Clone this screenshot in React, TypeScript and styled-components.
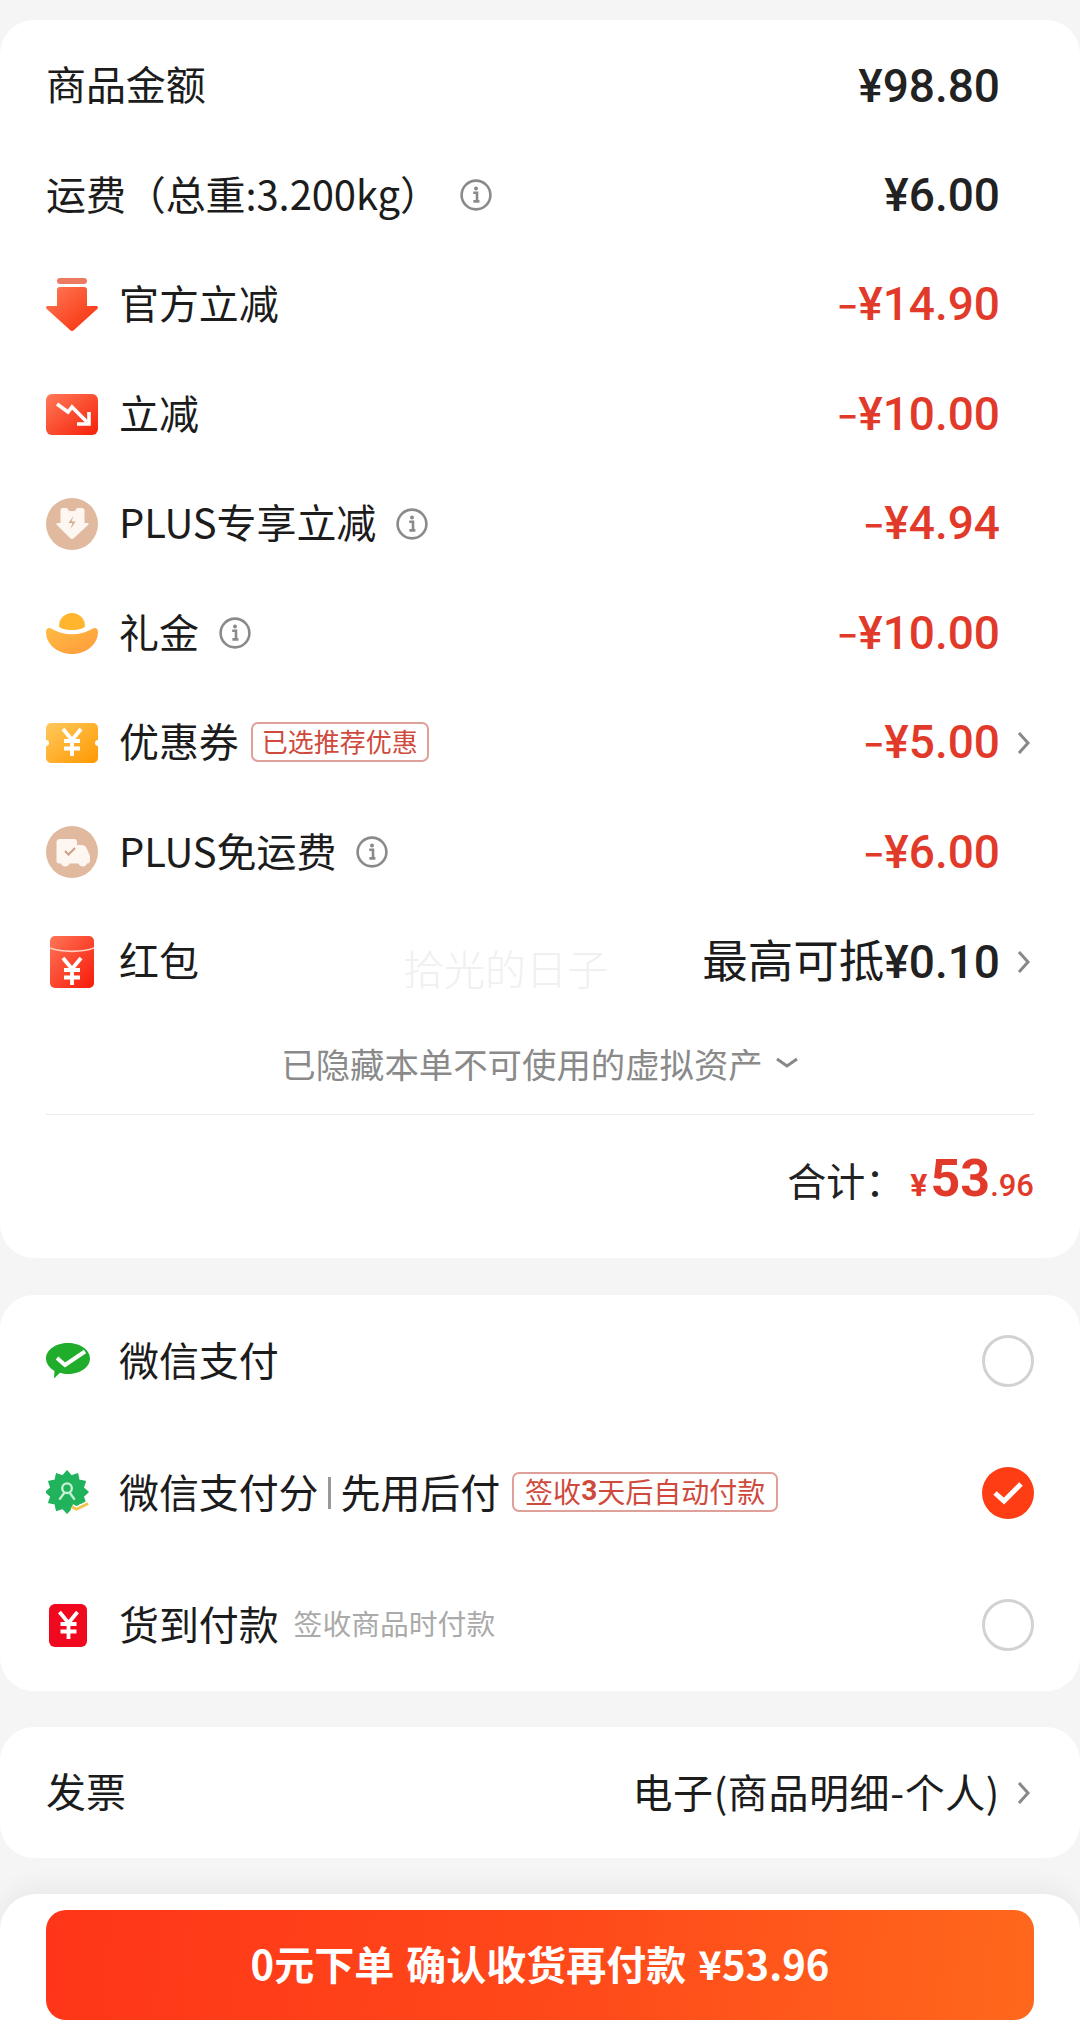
import { FC, ReactNode } from 'react'
import styled, { createGlobalStyle } from 'styled-components'

const GlobalStyle = createGlobalStyle`
  html, body {
    margin: 0;
    padding: 0;
    background: #f5f5f5;
  }
  * {
    box-sizing: border-box;
  }
`

const CJK = `"Noto Sans CJK SC", "Noto Sans", sans-serif`

const Page = styled.div`
  position: relative;
  width: 1080px;
  height: 2037px;
  overflow: hidden;
  padding-top: 20px;
  background: #f5f5f5;
  color: #1c1c1c;
  font-family: ${CJK};
  font-size: 40px;
`

const Card = styled.section`
  background: #fff;
  border-radius: 34px;
  margin-bottom: 36px;
`

const PriceCard = styled(Card)`
  height: 1238px;
  padding-top: 11px;
  margin-bottom: 37px;
`

const Row = styled.div<{ $height?: number }>`
  display: flex;
  align-items: center;
  height: ${p => p.$height ?? 109.5}px;
  padding: 0 46px;
`

const IconSlot = styled.span`
  display: flex;
  justify-content: center;
  align-items: center;
  flex: none;
  width: 52px;
  margin-right: 21px;
`

const PayIconSlot = styled(IconSlot)`
  width: 44px;
  margin-right: 29px;
`

const Label = styled.span`
  padding-bottom: 5px;
  line-height: 48px;
  letter-spacing: -0.1px;
  white-space: nowrap;
`

const Spacer = styled.span`
  flex: 1;
`

const Amount = styled.span<{ $red?: boolean }>`
  padding-top: ${p => (p.$red ? 2 : 0)}px;
  font-family: Roboto, sans-serif;
  font-weight: 500;
  font-size: 46px;
  line-height: 52px;
  white-space: nowrap;
  color: ${p => (p.$red ? '#e23a2a' : '#222')};
`

const Minus = styled.span`
  font-size: 38px;
`

const PlainValue = styled.span<{ $size?: number }>`
  padding-bottom: 3px;
  font-size: ${p => p.$size ?? 40}px;
  letter-spacing: ${p => (p.$size ? 0 : 0.6)}px;
  line-height: 48px;
  white-space: nowrap;
`

const ValueNumber = styled.span`
  font-family: Roboto, sans-serif;
  font-weight: 500;
  font-size: 46px;
  color: #222;
`

const ChevronSlot = styled.span`
  display: flex;
  justify-content: flex-end;
  align-items: center;
  flex: none;
  width: 34px;
  padding-right: 4px;
`

const InfoWrap = styled.span`
  display: flex;
  margin-left: 20px;
`

const Tag = styled.span<{ $size?: number }>`
  display: inline-flex;
  align-items: center;
  height: 40px;
  padding: 0 ${p => (p.$size ? 11 : 9)}px 2px;
  margin-left: 12px;
  margin-bottom: 2px;
  border: 2px solid #e0a09a;
  border-radius: 7px;
  color: #cf4a3c;
  font-size: ${p => p.$size ?? 26}px;
  line-height: 1;
  white-space: nowrap;
`

const TagBold = styled.b`
  font-family: Roboto, sans-serif;
  font-weight: 700;
  font-size: 28px;
`

const Hint = styled.span`
  margin-left: 15px;
  padding-bottom: 6px;
  color: #aaa;
  font-size: 28.8px;
  white-space: nowrap;
`

const Divider = styled.span`
  display: inline-block;
  width: 3px;
  height: 32px;
  margin: 0 10px 0 9px;
  background: #999;
`

const CollapseRow = styled.div`
  display: flex;
  justify-content: center;
  align-items: center;
  gap: 12px;
  height: 62px;
  margin: 15px 46px 0;
  color: #8a8a8a;
  font-size: 34.4px;
`

const Rule = styled.div`
  height: 1px;
  margin: 20px 46px 0;
  background: #ececec;
`

const TotalRow = styled.div`
  display: flex;
  justify-content: flex-end;
  align-items: baseline;
  height: 104px;
  padding: 33px 46px 0 0;
  font-size: 39px;
  color: #222;
`

const TotalLabel = styled.span`
  margin-right: 6px;
`

const TotalPrice = styled.span`
  font-family: Roboto, sans-serif;
  font-weight: 500;
  color: #e23a2a;
  font-size: 31px;
`

const TotalYen = styled.span`
  font-weight: 700;
  font-size: 32px;
  margin-right: 3px;
`

const TotalMain = styled.span`
  font-weight: 700;
  font-size: 52px;
`

const Watermark = styled.span`
  position: absolute;
  left: 403px;
  top: 942px;
  font-size: 41px;
  line-height: 50px;
  font-weight: 300;
  color: #f0f0f0;
  white-space: nowrap;
`

const Radio = styled.span<{ $checked?: boolean }>`
  display: flex;
  justify-content: center;
  align-items: center;
  flex: none;
  width: 52px;
  height: 52px;
  border-radius: 50%;
  border: ${p => (p.$checked ? '0' : '3px solid #d2d2d2')};
  background: ${p => (p.$checked ? '#ff3d14' : '#fff')};
`

const BottomBar = styled.div`
  height: 160px;
  padding: 16px 46px 0;
  background: #fff;
  border-radius: 36px 36px 0 0;
  box-shadow: 0 -8px 24px rgba(0, 0, 0, 0.05);
`

const SubmitButton = styled.button`
  display: flex;
  justify-content: center;
  align-items: center;
  width: 100%;
  height: 110px;
  padding: 0 0 4px;
  border: 0;
  border-radius: 20px;
  background: linear-gradient(95deg, #ff3518 0%, #ff4a1a 55%, #ff681c 100%);
  color: #fff;
  font-family: ${CJK};
  font-size: 40px;
  font-weight: 700;
  word-spacing: 3px;
  white-space: pre;
`

const Info: FC = () => (
  <InfoWrap>
    <svg width="32" height="32" viewBox="0 0 32 32" fill="none">
      <circle cx="16" cy="16" r="14.4" stroke="#8a8a8a" strokeWidth="2.6" />
      <circle cx="16" cy="9.6" r="2" fill="#8a8a8a" />
      <path d="M13.2 13.8h3.8v8M13.4 22.4h6" stroke="#8a8a8a" strokeWidth="2.6" />
    </svg>
  </InfoWrap>
)

const Chevron: FC = () => (
  <svg width="13" height="26" viewBox="0 0 13 26" fill="none">
    <path d="M2 3l9 10-9 10" stroke="#888" strokeWidth="3" />
  </svg>
)

const Yen: FC<{ x: number; y: number; s: number }> = ({ x, y, s }) => (
  <g transform={`translate(${x} ${y}) scale(${s})`} stroke="#fff" strokeWidth="3.8" fill="none">
    <path d="M1 0l9 11 9-11M10 11v16M2 12h16M2 19.500h16" />
  </g>
)

const ArrowIcon: FC = () => (
  <svg width="52" height="53" viewBox="0 0 52 53">
    <defs>
      <linearGradient id="arrow" x1="0" y1="0" x2="1" y2="1">
        <stop offset="0" stopColor="#ff7a58" />
        <stop offset="1" stopColor="#f72c08" />
      </linearGradient>
    </defs>
    <rect x="11" y="0" width="30" height="6" rx="3" fill="#ec7a60" />
    <path d="M11 12a3 3 0 013-3h24a3 3 0 013 3v16h9c2 0 2.600 1.500 1.200 3L28 52c-1.200 1.200-2.800 1.200-4 0L.8 31C-.6 29.500 0 28 2 28h9z" fill="url(#arrow)" />
  </svg>
)

const DropIcon: FC = () => (
  <svg width="52" height="41" viewBox="0 0 52 41" fill="none">
    <defs>
      <linearGradient id="drop" x1="0" y1="0" x2="1" y2="1">
        <stop offset="0" stopColor="#ff7a58" />
        <stop offset="1" stopColor="#f5200a" />
      </linearGradient>
    </defs>
    <rect width="52" height="41" rx="6" fill="url(#drop)" />
    <path d="M11 10l11 8 4-5 15 15" stroke="#fff" strokeWidth="3.6" />
    <path d="M43 18v12H31" stroke="#fff" strokeWidth="3.6" />
  </svg>
)

const PlusBadgeIcon: FC = () => (
  <svg width="52" height="52" viewBox="0 0 52 52">
    <circle cx="26" cy="26" r="26" fill="#e1b99e" />
    <path d="M16 10h5l2 3h6l2-3h5c1.500 0 2.500 1 2.500 2.500V25h3c1 0 1.500 1 .8 1.800L28 40c-1.200 1.200-2.800 1.200-4 0L10.700 26.800C10 26 10.500 25 11.500 25h3V12.500c0-1.500 1-2.500 1.500-2.500z" fill="#fdf6f1" />
    <path d="M27.500 18l-5 7h4l-2 6 5-7.500h-4z" fill="#d8a98c" />
  </svg>
)

const IngotIcon: FC = () => (
  <svg width="52" height="41" viewBox="0 0 52 41">
    <defs>
      <linearGradient id="ingot" x1="0" y1="0" x2="1" y2="1">
        <stop offset="0" stopColor="#ffbb42" />
        <stop offset="1" stopColor="#ff9a3c" />
      </linearGradient>
    </defs>
    <path d="M13 13a13 13 0 0126 0c0 2-6 4-13 4s-13-2-13-4z" fill="#ffb52e" />
    <path d="M0 19c0-3.500 3-5 6-3 12 7 28 7 40 0 3-2 6-.5 6 3 0 12-11.500 22-26 22S0 31 0 19z" fill="url(#ingot)" />
  </svg>
)

const CouponIcon: FC = () => (
  <svg width="52" height="40" viewBox="0 0 52 40">
    <defs>
      <linearGradient id="coupon" x1="0" y1="0" x2="1" y2="1">
        <stop offset="0" stopColor="#ffc95c" />
        <stop offset="1" stopColor="#ff9800" />
      </linearGradient>
    </defs>
    <path d="M5 0h42a5 5 0 015 5v12a3 3 0 000 6v12a5 5 0 01-5 5H5a5 5 0 01-5-5V23a3 3 0 000-6V5a5 5 0 015-5z" fill="url(#coupon)" />
    <Yen x={16} y={6} s={1} />
  </svg>
)

const TruckBadgeIcon: FC = () => (
  <svg width="52" height="52" viewBox="0 0 52 52" fill="none">
    <circle cx="26" cy="26" r="26" fill="#e1b99e" />
    <path d="M14 13h14c2 0 3 1 3 3v3h4c3 0 5 1.500 6 4l3 7v5c0 1.500-1 2.500-2.500 2.500H41a4.500 4.500 0 01-8.500 0h-9a4.500 4.500 0 01-8.500 0h-2c-1.500 0-2.500-1-2.500-2.500V16c0-2 1.500-3 3.500-3z" fill="#fdf6f1" />
    <path d="M19 25l3.500 3.500L29 22" stroke="#c9a48c" strokeWidth="2.200" />
  </svg>
)

const PacketIcon: FC = () => (
  <svg width="44" height="52" viewBox="0 0 44 52" fill="none">
    <defs>
      <linearGradient id="packet" x1="0" y1="0" x2="1" y2="1">
        <stop offset="0" stopColor="#ff7558" />
        <stop offset="1" stopColor="#f71a08" />
      </linearGradient>
    </defs>
    <rect width="44" height="52" rx="5" fill="url(#packet)" />
    <path d="M0 12c12 4.500 32 4.500 44 0" stroke="#ffd0c4" strokeWidth="1.600" />
    <Yen x={12} y={22} s={1} />
  </svg>
)

const WechatIcon: FC = () => (
  <svg width="44" height="36" viewBox="0 0 44 36" fill="none">
    <path d="M22 0c12 0 22 6.800 22 15.500S34 31 22 31c-3 0-5.500-.4-8-1.200L8 35.500l.5-7.500C3.500 25 0 20.500 0 15.500 0 6.800 10 0 22 0z" fill="#20ad2b" />
    <path d="M11 15l8 7L39 8.500" stroke="#fff" strokeWidth="4" />
  </svg>
)

const starPoints = Array.from({ length: 24 }, (_, i) => {
  const r = i % 2 === 0 ? 22 : 17.5
  const a = (i * Math.PI) / 12 - Math.PI / 2
  return `${22 + r * Math.cos(a)},${22 + r * Math.sin(a)}`
}).join(' ')

const ScoreIcon: FC = () => (
  <svg width="46" height="46" viewBox="0 0 46 46" fill="none">
    <polygon points={starPoints} fill="#21b35c" stroke="#21b35c" strokeWidth="1.500" strokeLinejoin="round" />
    <circle cx="22" cy="18" r="5" stroke="#c9f2d6" strokeWidth="2.400" />
    <path d="M19 23l-5 7M25 23l5 7" stroke="#c9f2d6" strokeWidth="2.400" />
    <path d="M27 37.500l5 2.500 12-6" stroke="#fff" strokeWidth="6" />
    <path d="M27 37.500l5 2.500 12-6" stroke="#f3c44a" strokeWidth="3" />
  </svg>
)

const CodIcon: FC = () => (
  <svg width="38" height="43" viewBox="0 0 38 43">
    <rect width="38" height="43" rx="6" fill="#f0081e" />
    <Yen x={9.500} y={8} s={1} />
  </svg>
)

const CheckMark: FC = () => (
  <svg width="32" height="24" viewBox="0 0 32 24" fill="none">
    <path d="M3 12l9 8L29 3" stroke="#fff" strokeWidth="5" />
  </svg>
)

interface DiscountRow {
  icon: ReactNode
  label: string
  value: string
  info?: boolean
  tag?: string
  chevron?: boolean
}

const discounts: DiscountRow[] = [
  { icon: <ArrowIcon />, label: '官方立减', value: '¥14.90' },
  { icon: <DropIcon />, label: '立减', value: '¥10.00' },
  { icon: <PlusBadgeIcon />, label: 'PLUS专享立减', value: '¥4.94', info: true },
  { icon: <IngotIcon />, label: '礼金', value: '¥10.00', info: true },
  { icon: <CouponIcon />, label: '优惠券', value: '¥5.00', tag: '已选推荐优惠', chevron: true },
  { icon: <TruckBadgeIcon />, label: 'PLUS免运费', value: '¥6.00', info: true }
]

const App: FC = () => (
  <Page>
    <GlobalStyle />
    <PriceCard>
      <Row>
        <Label>商品金额</Label>
        <Spacer />
        <Amount>¥98.80</Amount>
        <ChevronSlot />
      </Row>
      <Row>
        <Label>运费（总重:3.200kg）</Label>
        <Info />
        <Spacer />
        <Amount>¥6.00</Amount>
        <ChevronSlot />
      </Row>
      {discounts.map(d => (
        <Row key={d.label}>
          <IconSlot>{d.icon}</IconSlot>
          <Label>{d.label}</Label>
          {d.info && <Info />}
          {d.tag && <Tag>{d.tag}</Tag>}
          <Spacer />
          <Amount $red>
            <Minus>−</Minus>
            {d.value}
          </Amount>
          <ChevronSlot>{d.chevron && <Chevron />}</ChevronSlot>
        </Row>
      ))}
      <Row>
        <IconSlot>
          <PacketIcon />
        </IconSlot>
        <Label>红包</Label>
        <Spacer />
        <PlainValue $size={45.5}>
          最高可抵<ValueNumber>¥0.10</ValueNumber>
        </PlainValue>
        <ChevronSlot>
          <Chevron />
        </ChevronSlot>
      </Row>
      <CollapseRow>
        已隐藏本单不可使用的虚拟资产
        <svg width="24" height="14" viewBox="0 0 24 14" fill="none">
          <path d="M2 3l10 7 10-7" stroke="#888" strokeWidth="3" />
        </svg>
      </CollapseRow>
      <Rule />
      <TotalRow>
        <TotalLabel>合计：</TotalLabel>
        <TotalPrice>
          <TotalYen>¥</TotalYen>
          <TotalMain>53</TotalMain>.96
        </TotalPrice>
      </TotalRow>
    </PriceCard>

    <Card>
      <Row $height={132}>
        <PayIconSlot>
          <WechatIcon />
        </PayIconSlot>
        <Label>微信支付</Label>
        <Spacer />
        <Radio />
      </Row>
      <Row $height={132}>
        <PayIconSlot>
          <ScoreIcon />
        </PayIconSlot>
        <Label>微信支付分</Label>
        <Divider />
        <Label>先用后付</Label>
        <Tag $size={28}>
          签收<TagBold>3</TagBold>天后自动付款
        </Tag>
        <Spacer />
        <Radio $checked>
          <CheckMark />
        </Radio>
      </Row>
      <Row $height={132}>
        <PayIconSlot>
          <CodIcon />
        </PayIconSlot>
        <Label>货到付款</Label>
        <Hint>签收商品时付款</Hint>
        <Spacer />
        <Radio />
      </Row>
    </Card>

    <Card>
      <Row $height={131}>
        <Label>发票</Label>
        <Spacer />
        <PlainValue>电子(商品明细-个人)</PlainValue>
        <ChevronSlot>
          <Chevron />
        </ChevronSlot>
      </Row>
    </Card>

    <BottomBar>
      <SubmitButton>0元下单 确认收货再付款 ¥53.96</SubmitButton>
    </BottomBar>

    <Watermark>拾光的日子</Watermark>
  </Page>
)

export default App
